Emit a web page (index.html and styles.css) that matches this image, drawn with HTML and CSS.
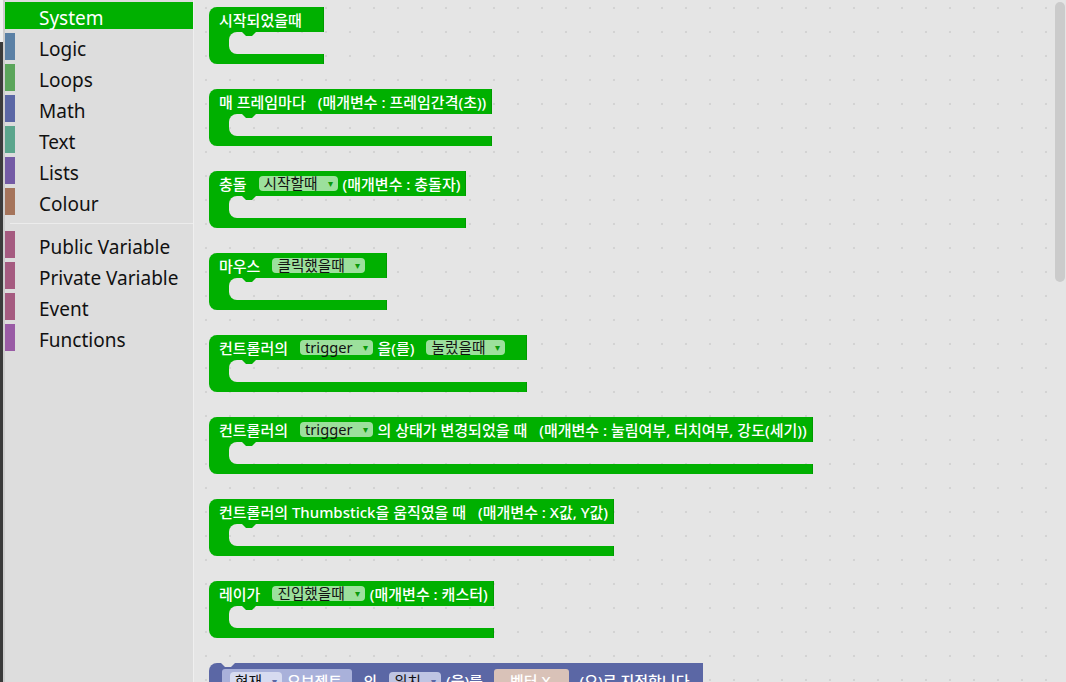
FILE: index.html
```html
<!DOCTYPE html>
<html>
<head>
  <title>Block Editor</title>
  <link rel="stylesheet" href="styles.css">
</head>
<body>
  <div class="app">
    <div class="edge"></div>

    <nav class="toolbox">
      <div class="cat selected"><span class="swatch"></span><span class="name">System</span></div>
      <div class="cat logic"><span class="swatch"></span><span class="name">Logic</span></div>
      <div class="cat loops"><span class="swatch"></span><span class="name">Loops</span></div>
      <div class="cat math"><span class="swatch"></span><span class="name">Math</span></div>
      <div class="cat text"><span class="swatch"></span><span class="name">Text</span></div>
      <div class="cat lists"><span class="swatch"></span><span class="name">Lists</span></div>
      <div class="cat colour"><span class="swatch"></span><span class="name">Colour</span></div>
      <div class="sep"></div>
      <div class="cat vars"><span class="swatch"></span><span class="name">Public Variable</span></div>
      <div class="cat vars"><span class="swatch"></span><span class="name">Private Variable</span></div>
      <div class="cat vars"><span class="swatch"></span><span class="name">Event</span></div>
      <div class="cat funcs"><span class="swatch"></span><span class="name">Functions</span></div>
    </nav>

    <main class="workspace">
      <div class="stack">

        <div class="block">
          <div class="bar"><span class="lbl">시작되었을때</span></div>
          <div class="mouth"><div class="hole"></div></div>
          <div class="foot"></div>
        </div>

        <div class="block">
          <div class="bar tight"><span class="lbl">매 프레임마다</span><span class="lbl">(매개변수 : 프레임간격(초))</span></div>
          <div class="mouth"><div class="hole"></div></div>
          <div class="foot"></div>
        </div>

        <div class="block">
          <div class="bar tight"><span class="lbl">충돌</span><span class="dd">시작할때<i>▾</i></span><span class="lbl">(매개변수 : 충돌자)</span></div>
          <div class="mouth"><div class="hole"></div></div>
          <div class="foot"></div>
        </div>

        <div class="block">
          <div class="bar"><span class="lbl">마우스</span><span class="dd">클릭했을때<i>▾</i></span></div>
          <div class="mouth"><div class="hole"></div></div>
          <div class="foot"></div>
        </div>

        <div class="block">
          <div class="bar"><span class="lbl">컨트롤러의</span><span class="dd">trigger<i>▾</i></span><span class="lbl">을(를)</span><span class="dd">눌렀을때<i>▾</i></span></div>
          <div class="mouth"><div class="hole"></div></div>
          <div class="foot"></div>
        </div>

        <div class="block">
          <div class="bar tight"><span class="lbl">컨트롤러의</span><span class="dd">trigger<i>▾</i></span><span class="lbl">의 상태가 변경되었을 때</span><span class="lbl">(매개변수 : 눌림여부, 터치여부, 강도(세기))</span></div>
          <div class="mouth"><div class="hole"></div></div>
          <div class="foot"></div>
        </div>

        <div class="block">
          <div class="bar tight"><span class="lbl">컨트롤러의 Thumbstick을 움직였을 때</span><span class="lbl">(매개변수 : X값, Y값)</span></div>
          <div class="mouth"><div class="hole"></div></div>
          <div class="foot"></div>
        </div>

        <div class="block">
          <div class="bar tight"><span class="lbl">레이가</span><span class="dd">진입했을때<i>▾</i></span><span class="lbl">(매개변수 : 캐스터)</span></div>
          <div class="mouth"><div class="hole"></div></div>
          <div class="foot"></div>
        </div>

        <div class="block setter">
          <div class="bar">
            <span class="inner obj"><span class="dd">현재<i>▾</i></span><span class="lbl">오브젝트</span></span>
            <span class="lbl">의</span>
            <span class="dd">위치<i>▾</i></span>
            <span class="lbl">(을)를</span>
            <span class="inner vec"><span class="lbl">벡터 X</span></span>
            <span class="lbl">(으)로 지정합니다</span>
          </div>
        </div>

      </div>
      <div class="scrollbar"></div>
    </main>
  </div>
</body>
</html>
```

FILE: styles.css
```css
body {
  margin: 0;
  overflow: hidden;
  font-family: "Noto Sans", "Noto Sans CJK KR", sans-serif;
}

.app {
  display: flex;
  width: 1066px;
  height: 682px;
  overflow: hidden;
}

/* thin window edge on the far left */
.edge {
  width: 5px;
  flex-shrink: 0;
  background:
    linear-gradient(to bottom, #efefef 42px, #3a3a3a 42px) 0 0 / 3px 100% no-repeat,
    #cdcdcd;
}

/* ---------- toolbox ---------- */
.toolbox {
  display: flex;
  flex-direction: column;
  width: 188px;
  flex-shrink: 0;
  background-color: #ddd;
  border-right: 1px solid #efefef;
  padding-top: 2px;
}

.cat {
  display: flex;
  height: 27px;
  margin-bottom: 4px;
  font-size: 19px;
  color: #111;
}

.swatch {
  width: 10px;
}

.name {
  padding: 6px 0 0 24px;
  line-height: 21px;
}

.cat.selected {
  background-color: #00b000;
  color: #fff;
}

.logic .swatch { background-color: #5b80a5; }
.loops .swatch { background-color: #5ba55b; }
.math .swatch { background-color: #5b67a5; }
.text .swatch { background-color: #5ba58c; }
.lists .swatch { background-color: #745ba5; }
.colour .swatch { background-color: #a5745b; }
.vars .swatch { background-color: #a55b80; }
.funcs .swatch { background-color: #995ba5; }

.sep {
  height: 1px;
  margin: 0 0 7px 5px;
  border-top: 4px solid #ddd;
  background-color: #ececec;
  background-clip: content-box;
}

/* ---------- workspace ---------- */
.workspace,
.hole {
  background-color: #e5e5e5;
  background-image: radial-gradient(circle, #d3d3d3 1px, transparent 1.6px);
  background-size: 24px 24px;
  background-position: 2px 20px;
  background-attachment: fixed;
}

.workspace {
  position: relative;
  flex: 1;
}

.stack {
  display: flex;
  flex-direction: column;
  align-items: flex-start;
  gap: 25px;
  padding: 7px 0 0 15px;
}

.block {
  display: flex;
  flex-direction: column;
  font-size: 15px;
  font-weight: 500;
  color: #fff;
}

.bar {
  display: flex;
  align-items: center;
  height: 25px;
  padding: 0 22px 0 10px;
  background-color: #00b000;
  border-radius: 8px 0 0 0;
  box-shadow: inset -1px 0 0 #009a00;
  white-space: nowrap;
}

.bar.tight {
  padding-right: 6px;
}

.lbl + .lbl,
.lbl + .dd,
.dd + .dd {
  margin-left: 12px;
}

.dd + .lbl {
  margin-left: 5px;
}

.dd {
  display: flex;
  align-items: center;
  height: 15px;
  padding: 0 5px;
  border-radius: 4px;
  background-color: #9ce09c;
  color: #111;
  font-size: 14.67px;
  font-weight: 400;
  line-height: 15px;
}

.dd i {
  font-style: normal;
  font-size: 10px;
  color: #0a9a0a;
  margin-left: 10px;
}

.mouth {
  display: flex;
  height: 22px;
  padding-left: 20px;
  background-color: #00b000;
}

.hole {
  position: relative;
  flex: 1;
  border-radius: 8px 0 0 8px;
}

/* connection tab hanging into the statement input */
.hole::before {
  content: "";
  position: absolute;
  left: 13px;
  top: 0;
  width: 14px;
  height: 4px;
  background-color: #00b000;
  clip-path: polygon(0 0, 100% 0, 10px 100%, 4px 100%);
}

.foot {
  height: 10px;
  background-color: #00b000;
  border-radius: 0 0 0 8px;
  box-shadow: inset -1px 0 0 #009a00;
}

/* ---------- blue setter block ---------- */
.setter {
  position: relative;
}

.setter .bar {
  height: auto;
  align-items: flex-start;
  padding: 6px 14px 8px 13px;
  background-color: #5b67a5;
  box-shadow: none;
}

.setter::before {
  content: "";
  position: absolute;
  left: 12px;
  top: 0;
  width: 14px;
  height: 4px;
  background-color: #e5e5e5;
  clip-path: polygon(0 0, 100% 0, 10px 100%, 4px 100%);
}

.setter .lbl {
  line-height: 24px;
}

.setter .dd {
  height: 18px;
  margin-top: 3px;
  background-color: #bfc5e3;
}

.setter .dd i {
  color: #5b67a5;
}

.inner {
  display: flex;
  align-items: flex-start;
  height: 24px;
  padding: 0 10px 0 8px;
  border-radius: 3px;
}

.inner.obj {
  background-color: #a9b1da;
}

.inner.obj .dd {
  background-color: #d7dbf0;
}

.inner.vec {
  margin-left: 10px;
  padding: 0 18px 0 16px;
  background-color: #d9c2b8;
}

.setter .inner + .lbl,
.setter .lbl + .inner,
.setter .lbl + .lbl {
  margin-left: 11px;
}

.scrollbar {
  position: absolute;
  top: 2px;
  right: 1px;
  width: 10px;
  height: 280px;
  border-radius: 5px;
  background-color: #cbcbcb;
}
```
